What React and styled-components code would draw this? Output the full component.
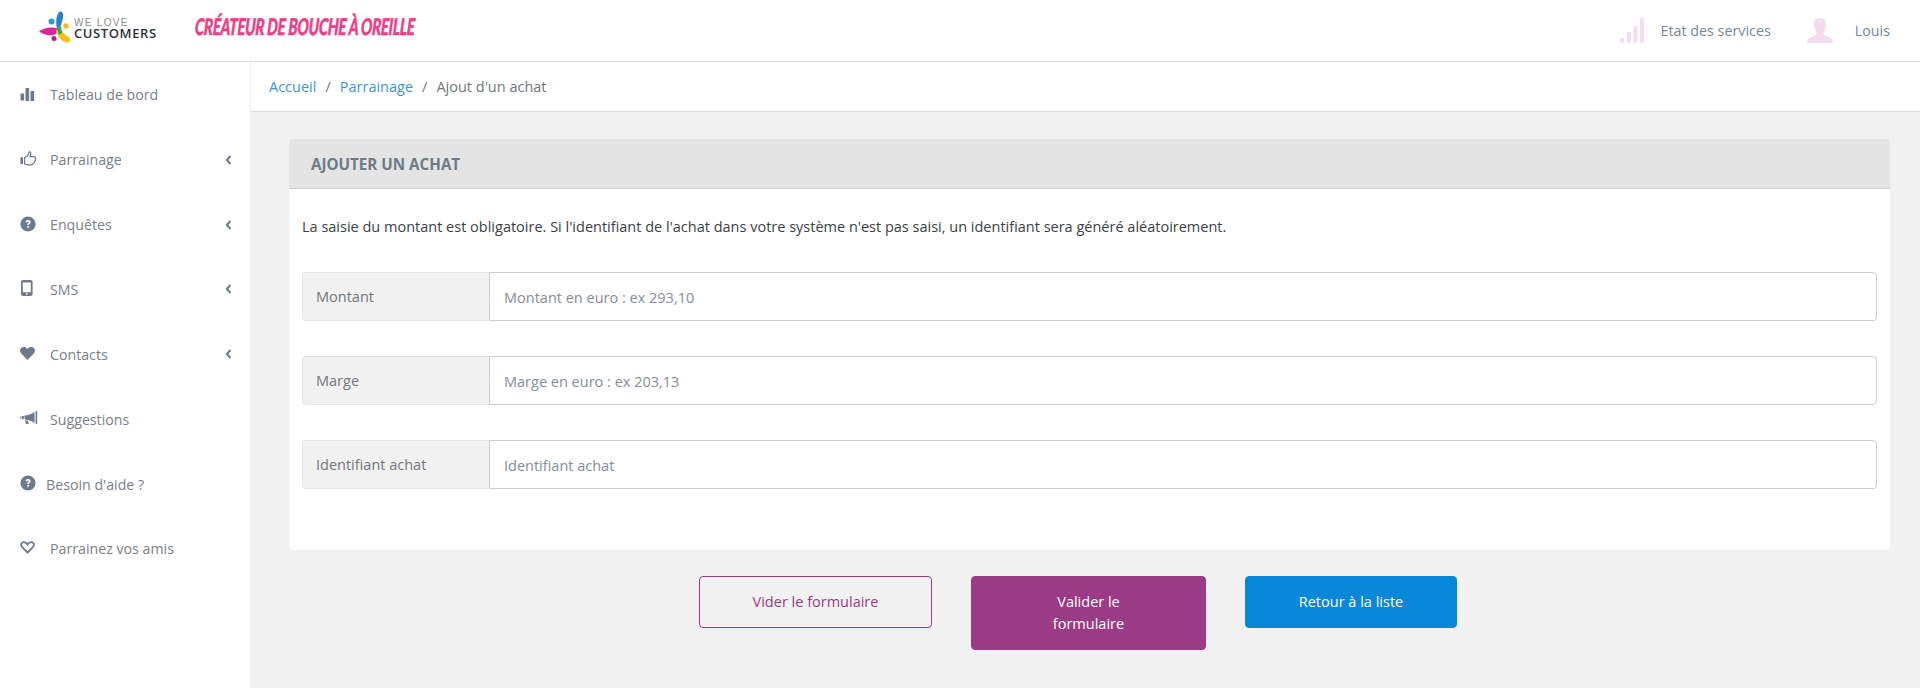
import React from "react";
import styled, { createGlobalStyle } from "styled-components";

const Global = createGlobalStyle`
  html, body { margin: 0; padding: 0; background: #f1f1f1; }
  body { font-family: "Open Sans", "Liberation Sans", sans-serif; font-size: 14.5px; color: #333; }
  * { box-sizing: border-box; }
`;

const Page = styled.div`
  width: 1920px; height: 688px; display: flex; flex-direction: column; overflow: hidden;
`;
const Header = styled.header`
  height: 62px; flex: none; background: #fff; border-bottom: 1px solid #d8dbdd;
  display: flex; align-items: center; padding: 0 30px 0 39px;
`;
const Logo = styled.div`display: flex; align-items: center; width: 156px; height: 32px; margin-top: -7px;`;
const LogoText = styled.div`
  margin-left: 2px; display: flex; flex-direction: column; line-height: 1; margin-top: 3px;
`;
const LogoTop = styled.span`font-size: 10px; color: #8b8d90; letter-spacing: 1.3px; line-height: 10px; font-family:"Liberation Sans",sans-serif;`;
const LogoBottom = styled.span`font-size: 13px; font-weight: 600; color: #2e3338; line-height: 11px; letter-spacing: .6px;`;
const Tagline = styled.div`
  margin-top: -9px; color: #ee3f86; font-family: "Lato", sans-serif; font-weight: 900; font-style: italic;
  font-size: 23px; letter-spacing: -.4px; white-space: nowrap; -webkit-text-stroke: .5px #ee3f86;
  transform: scaleX(.655) skewX(-5deg); transform-origin: left center;
`;
const HeaderRight = styled.div`margin-left: auto; display: flex; align-items: center;`;
const HeaderItem = styled.div`display: flex; align-items: center; gap: ${p => p.$gap}px; color: #7a8899; font-size: 14.3px;`;
const HeaderGap = styled.div`width: 36px;`;

const Body = styled.div`flex: 1; display: flex; min-height: 0;`;
const Sidebar = styled.nav`
  width: 251px; flex: none; background: #fff; border-right: 1px solid #eeeeee; padding-top: .3px;
`;
const NavItem = styled.div`
  height: 64.9px; display: flex; align-items: center; padding-left: 20px; padding-right: 18px; color: #7a8088; font-size: 14.2px;
`;
const NavIcon = styled.span`width: ${p => p.$w || 30}px; flex: none; display: flex; align-items: center; color: #6c7a89; margin-top: -2px;`;
const NavLabel = styled.span`flex: 1;`;

const Main = styled.main`flex: 1; display: flex; flex-direction: column; min-width: 0;`;
const Breadcrumb = styled.div`
  height: 50px; flex: none; background: #fff; border-bottom: 1px solid #d8dde2; display: flex; align-items: center;
  padding: 0 0 0 18px; color: #73777c;
`;
const Crumb = styled.span`color: #3d95dc;`;
const Sep = styled.span`margin: 0 9px; color: #73777c;`;
const Content = styled.div`padding: 27px 30px 0 38px; display: flex; flex-direction: column;`;
const Card = styled.section`background: #fff; border-radius: 4px; overflow: hidden; height: 411px;`;
const CardHead = styled.div`
  height: 50px; background: #e4e4e4; border-bottom: 1px solid #d4d4d4; display: flex; align-items: center;
  padding-left: 22px; font-size: 15.2px; font-weight: 700; color: #6d7a87;
`;
const CardBody = styled.div`padding: 27px 13px 0 13px;`;
const Intro = styled.p`margin: 0 0 35px; line-height: 21px; color: #3a3f44;`;
const Group = styled.div`display: flex; height: 49px; margin-bottom: 35px;`;
const Addon = styled.label`
  width: 187px; flex: none; background: #f1f1f1; border: 1px solid #e2e5e9; border-right: none; border-radius: 4px 0 0 4px;
  display: flex; align-items: center; padding: 0 0 0 13px; color: #73777c;
`;
const Input = styled.input`
  flex: 1; min-width: 0; border: 1px solid #c8ced6; border-radius: 0 4px 4px 0; padding: 2px 14px 0; font: inherit; background: #fff;
  outline: none;
  &::placeholder { color: #868e96; opacity: 1; }
`;
const Actions = styled.div`display: flex; justify-content: center; align-items: flex-start; gap: 39px; margin-top: 26px; padding-right: 23px;`;
const Button = styled.button`
  width: ${p => p.$w}px; min-height: 52px; padding: ${p => p.$tall ? "14px 70px" : "0 10px"}; border-radius: 4px; font: inherit; line-height: 22px; cursor: pointer;
  border: 1px solid ${p => p.$border}; background: ${p => p.$bg}; color: ${p => p.$color};
`;

const BarsIcon = () => (
  <svg width="15" height="14" viewBox="0 0 15 14" fill="currentColor"><rect x="0.5" y="6.5" width="3.6" height="7" /><rect x="5.5" y="1" width="3.6" height="13" /><rect x="10.5" y="4" width="3.6" height="10" /></svg>
);
const ThumbIcon = () => (
  <svg width="17" height="15" viewBox="0 0 17 15" fill="none" stroke="currentColor" strokeWidth="1.2"><rect x="0.4" y="6.3" width="2.6" height="6.7" fill="currentColor" stroke="none" /><path d="M4.6 6.5 L7.6 5 L9 1 C10.5 .6 11 2 10.6 3.6 L10 5.6 H14.2 C15.6 5.8 15.9 7 15.3 8 C15.7 9 15.2 10 14.6 10.4 C14.6 11.6 13.8 12.2 13.2 12.4 C13 13.4 12 13.8 11 13.8 H8 C6.6 13.8 5.8 13.2 4.6 12.9 Z" /></svg>
);
const HelpIcon = () => (
  <svg width="16" height="16" viewBox="0 0 16 16"><circle cx="8" cy="8" r="7.6" fill="currentColor" /><path d="M5.6 6.2 C5.7 4.8 6.8 4.1 8.1 4.1 C9.5 4.1 10.6 5 10.6 6.2 C10.6 7.7 8.9 7.7 8.8 9.1 H7.2 C7.2 7.1 8.8 7.1 8.8 6.3 C8.8 5.9 8.5 5.6 8 5.6 C7.5 5.6 7.2 5.9 7.1 6.5 Z" fill="#fff" /><rect x="7.2" y="10" width="1.7" height="1.7" fill="#fff" /></svg>
);
const PhoneIcon = () => (
  <svg width="14" height="16" viewBox="0 0 14 16"><path fillRule="evenodd" fill="currentColor" d="M3 0 H10.5 C11.8 0 12.6 .8 12.6 2 V14 C12.6 15.2 11.8 16 10.5 16 H3 C1.8 16 1 15.2 1 14 V2 C1 .8 1.8 0 3 0 Z M2.8 2.4 V12.2 H10.8 V2.4 Z M6 13.2 V14.8 H7.6 V13.2 Z" /></svg>
);
const HeartIcon = () => (
  <svg width="15" height="13" viewBox="0 0 15 13" fill="currentColor"><path d="M7.5 13 L1.2 6.6 C-.4 4.8 -.3 2.2 1.2 .9 C2.9 -.5 5.9 -.2 7.5 2 C9.1 -.2 12.1 -.5 13.8 .9 C15.3 2.2 15.4 4.8 13.8 6.6 Z" /></svg>
);
const HeartOutlineIcon = () => (
  <svg width="15" height="13" viewBox="0 0 15 13" fill="none" stroke="currentColor" strokeWidth="1.8"><path d="M7.5 11.6 L2 6 C.8 4.7 .8 2.9 1.9 1.9 C3.2 .7 5.9 1 7.5 3.4 C9.1 1 11.8 .7 13.1 1.9 C14.2 2.9 14.2 4.7 13 6 Z" /></svg>
);
const MegaphoneIcon = () => (
  <svg width="18" height="14" viewBox="0 0 18 14" fill="currentColor"><rect x="15.6" y="0" width="1.6" height="13" /><path d="M14.6 1 V12 C11 9.6 8 8.8 4.5 8.6 V4.6 C8 4.2 11 3.2 14.6 1 Z" /><rect x="1.6" y="5" width="2.2" height="3.2" /><rect x="0" y="5.8" width="1" height="1.6" /><path d="M5 9.4 H8 L8.6 13 H6 Z" /></svg>
);
const Chevron = () => (
  <svg width="7" height="10" viewBox="0 0 7 10" fill="none" stroke="#6c7a89" strokeWidth="2"><path d="M5.5 1 L1.8 5 L5.5 9" /></svg>
);
const SignalIcon = () => (
  <svg width="24" height="25" viewBox="0 0 24 25" fill="#f3dcee"><rect x="0" y="20" width="4" height="5" /><rect x="7" y="14" width="4" height="11" /><rect x="13.5" y="8" width="4" height="17" /><rect x="20" y="0" width="4" height="25" /></svg>
);
const UserIcon = () => (
  <svg width="26" height="25" viewBox="0 0 26 25" fill="#f3dcee"><path d="M13 0 C17.2 0 19.4 3 19 7.5 C18.8 10 17.8 12.4 16.6 14 C16.4 15.4 16.6 16.6 18 17.4 L23.5 20 C25.2 20.8 26 22 26 25 H0 C0 22 .8 20.8 2.5 20 L8 17.4 C9.4 16.6 9.6 15.4 9.4 14 C8.2 12.4 7.2 10 7 7.5 C6.6 3 8.8 0 13 0 Z" /></svg>
);
const LogoMark = () => (
  <svg width="33" height="33" viewBox="0 0 33 33">
    <path d="M21 0.5 C24.5 0 24.5 5 23.5 9 C22.5 13 21 17 18.5 19 C16.5 14 16.5 3 21 0.5 Z" fill="#2a7fd0" />
    <circle cx="12.5" cy="10.5" r="3" fill="#2a9ae0" />
    <circle cx="27" cy="15" r="2.7" fill="#fbb917" />
    <path d="M0 20.5 C5 16.5 13 15.5 18.5 17.5 L17 23 C12 25.5 5 24 0 20.5 Z" fill="#d6249f" />
    <path d="M17 20 L20 16 C22.5 20 26 24 31 27 C32 31 29 32.5 26 31 C22 29 18.5 25 17 20 Z" fill="#fdc010" />
    <path d="M18 18 L22 15 L23 22 L20 24 Z" fill="#34a853" />
    <circle cx="15" cy="27.5" r="2.5" fill="#c2189b" />
  </svg>
);

const items = [
  { label: "Tableau de bord", icon: <BarsIcon /> },
  { label: "Parrainage", icon: <ThumbIcon />, chevron: true },
  { label: "Enquêtes", icon: <HelpIcon />, chevron: true },
  { label: "SMS", icon: <PhoneIcon />, chevron: true },
  { label: "Contacts", icon: <HeartIcon />, chevron: true },
  { label: "Suggestions", icon: <MegaphoneIcon /> },
  { label: "Besoin d'aide ?", icon: <HelpIcon />, w: 26 },
  { label: "Parrainez vos amis", icon: <HeartOutlineIcon /> },
];

const fields = [
  { label: "Montant", placeholder: "Montant en euro : ex 293,10" },
  { label: "Marge", placeholder: "Marge en euro : ex 203,13" },
  { label: "Identifiant achat", placeholder: "Identifiant achat" },
];

export default function App() {
  return (
    <Page>
      <Global />
      <Header>
        <Logo>
          <LogoMark />
          <LogoText>
            <LogoTop>WE LOVE</LogoTop>
            <LogoBottom>CUSTOMERS</LogoBottom>
          </LogoText>
        </Logo>
        <Tagline>CRÉATEUR DE BOUCHE À OREILLE</Tagline>
        <HeaderRight>
          <HeaderItem $gap={17}><SignalIcon />Etat des services</HeaderItem>
          <HeaderGap />
          <HeaderItem $gap={22}><UserIcon />Louis</HeaderItem>
        </HeaderRight>
      </Header>
      <Body>
        <Sidebar>
          {items.map((it) => (
            <NavItem key={it.label}>
              <NavIcon $w={it.w}>{it.icon}</NavIcon>
              <NavLabel>{it.label}</NavLabel>
              {it.chevron && <Chevron />}
            </NavItem>
          ))}
        </Sidebar>
        <Main>
          <Breadcrumb>
            <Crumb>Accueil</Crumb><Sep>/</Sep><Crumb>Parrainage</Crumb><Sep>/</Sep><span>Ajout d'un achat</span>
          </Breadcrumb>
          <Content>
            <Card>
              <CardHead>AJOUTER UN ACHAT</CardHead>
              <CardBody>
                <Intro>La saisie du montant est obligatoire. Si l'identifiant de l'achat dans votre système n'est pas saisi, un identifiant sera généré aléatoirement.</Intro>
                {fields.map(f => (
                  <Group key={f.label}>
                    <Addon>{f.label}</Addon>
                    <Input placeholder={f.placeholder} />
                  </Group>
                ))}
              </CardBody>
            </Card>
            <Actions>
              <Button $w={233} $border="#9b3b85" $bg="transparent" $color="#9b3b85">Vider le formulaire</Button>
              <Button $w={235} $tall $border="#9b3b85" $bg="#9b3b85" $color="#fff">Valider le formulaire</Button>
              <Button $w={212} $border="#0788da" $bg="#0788da" $color="#fff">Retour à la liste</Button>
            </Actions>
          </Content>
        </Main>
      </Body>
    </Page>
  );
}
